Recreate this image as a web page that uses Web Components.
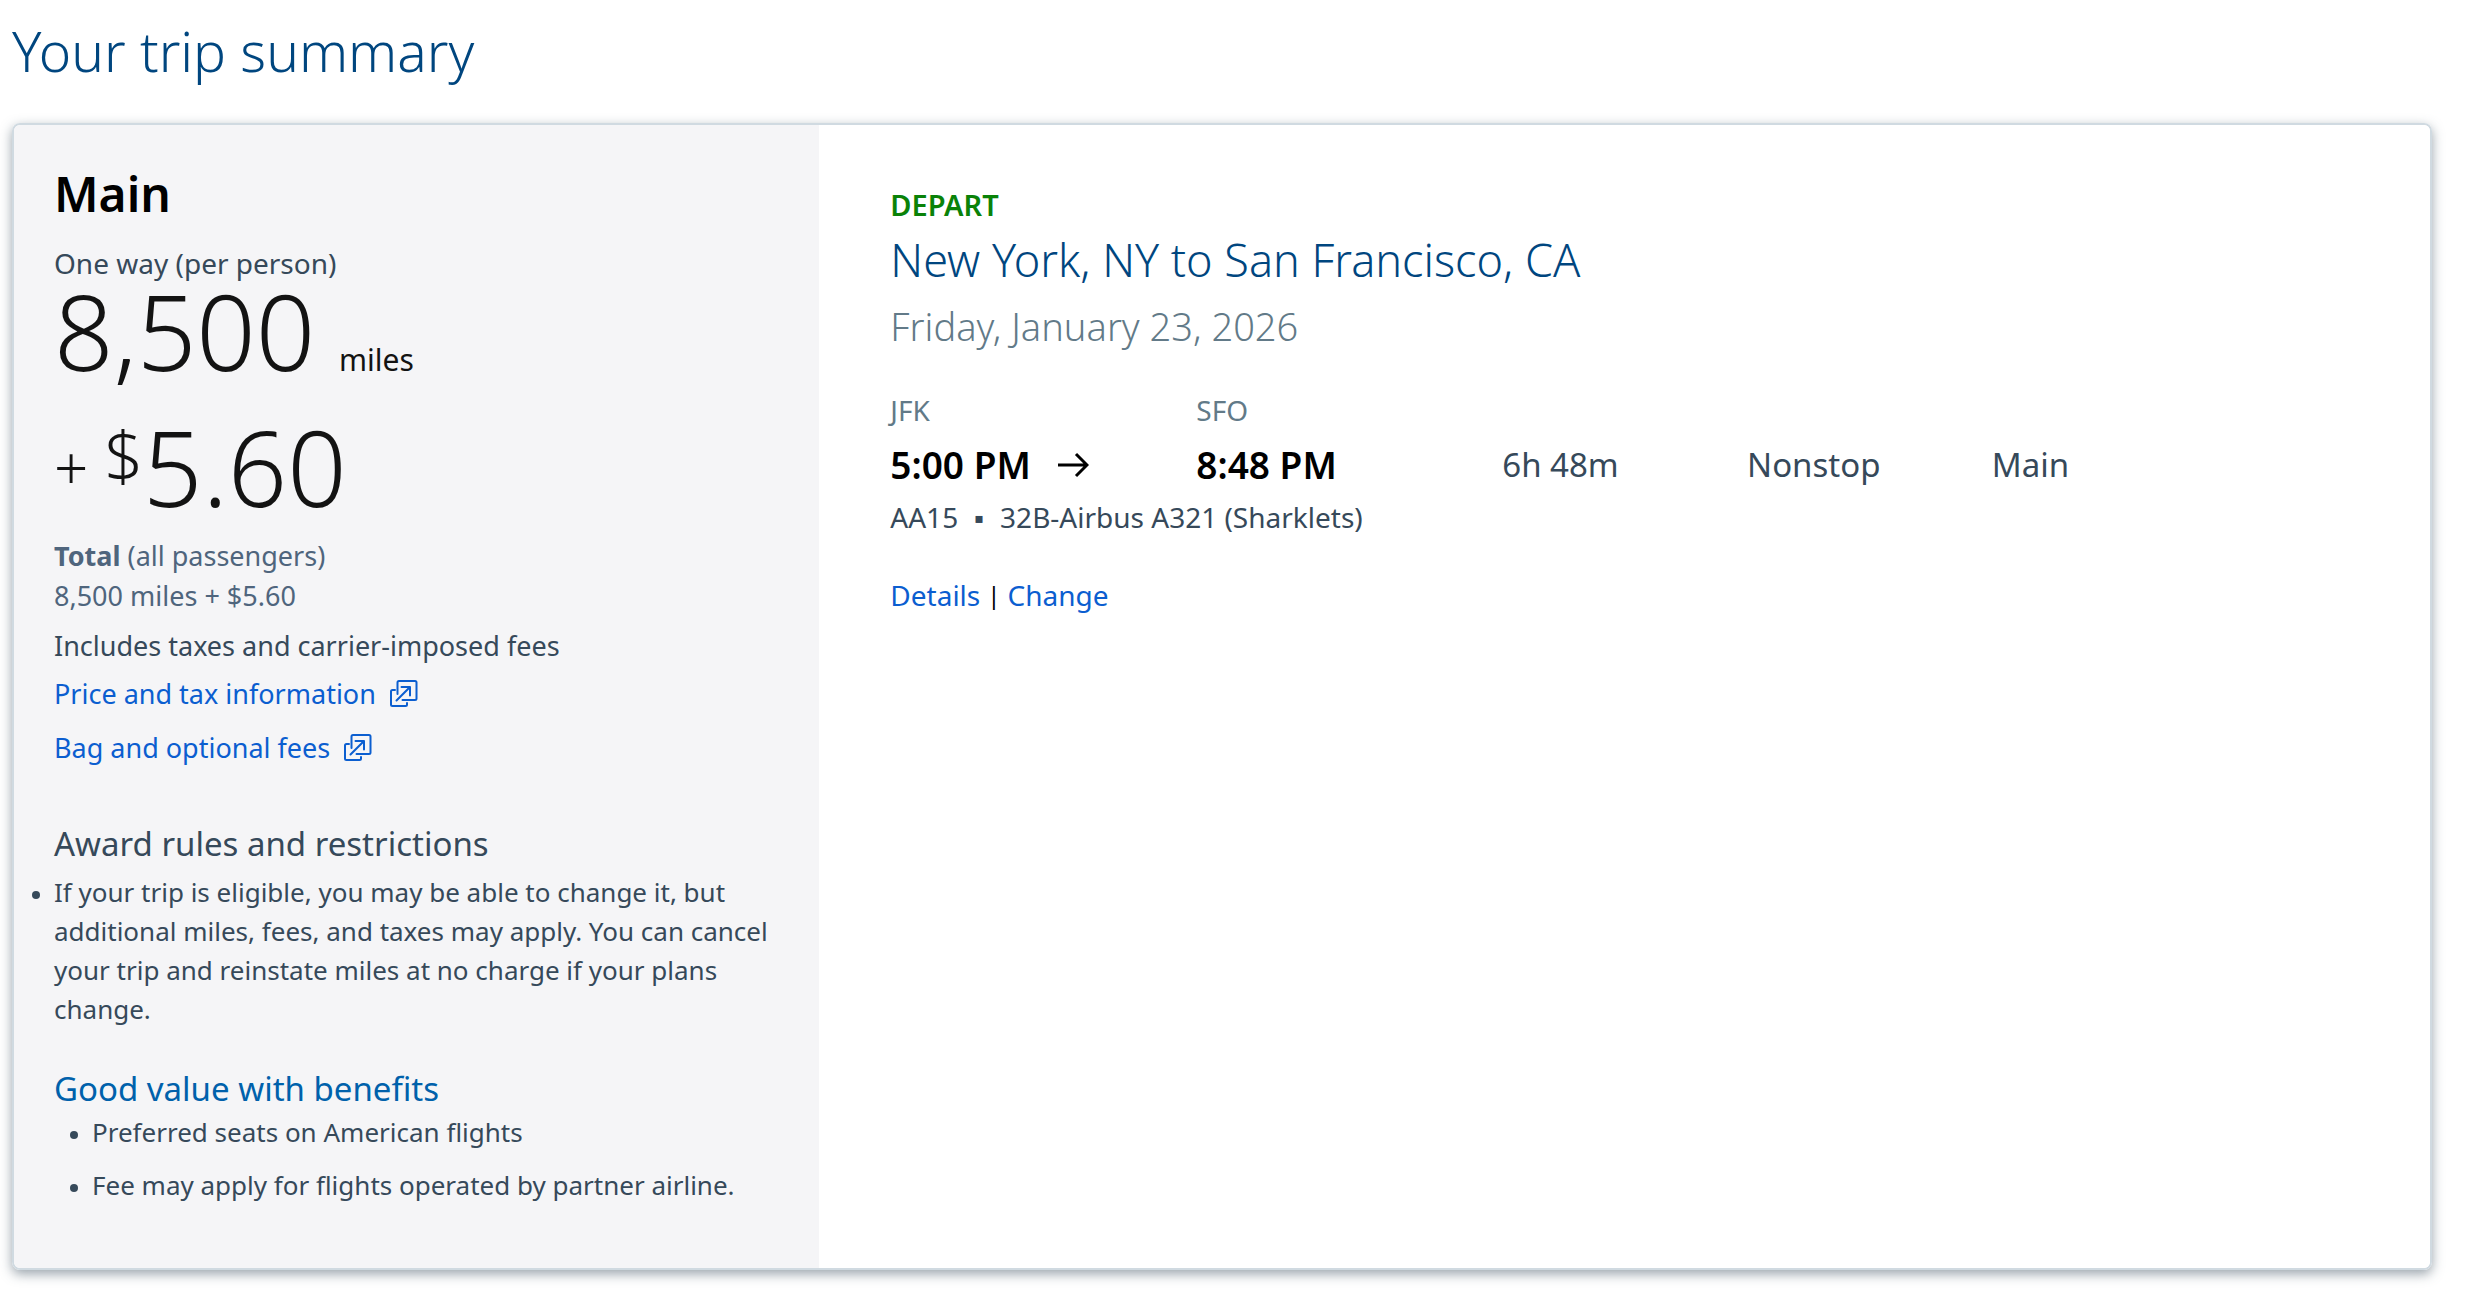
<!DOCTYPE html>
<html lang="en">
<head>
<meta charset="utf-8">
<title>Your trip summary</title>
<style>
  body {
    margin: 0;
    background: #fff;
    color: #36495a;
    font-family: "Noto Sans", "Open Sans", sans-serif;
    --navy: #00467f;
    --link: #0b5ed0;
    --muted: #627a88;
    --ink: #131313;
  }
</style>
</head>
<body>
<trip-summary heading="Your trip summary">
  <fare-panel slot="fare" name="Main" miles="8,500" fee="5.60">
    <ext-link href="#price">Price and tax information</ext-link>
    <ext-link href="#bags">Bag and optional fees</ext-link>
    <note-list slot="notes" heading="Award rules and restrictions">
      <li>If your trip is eligible, you may be able to change it, but additional miles, fees, and taxes may apply. You can cancel your trip and reinstate miles at no charge if your plans change.</li>
    </note-list>
    <note-list slot="notes" accent heading="Good value with benefits">
      <li>Preferred seats on American flights</li>
      <li>Fee may apply for flights operated by partner airline.</li>
    </note-list>
  </fare-panel>
  <flight-slice slot="slice" label="DEPART" route="New York, NY to San Francisco, CA" date="Friday, January 23, 2026">
    <airport-time slot="times" code="JFK" time="5:00 PM" arrow></airport-time>
    <airport-time slot="times" code="SFO" time="8:48 PM"></airport-time>
    <span slot="times">6h 48m</span>
    <span slot="times">Nonstop</span>
    <span slot="times">Main</span>
    <span slot="aircraft">AA15</span>
    <span slot="aircraft">▪</span>
    <span slot="aircraft">32B-Airbus A321 (Sharklets)</span>
  </flight-slice>
</trip-summary>

<script>
  const define = (name, render) => customElements.define(name, class extends HTMLElement {
    connectedCallback() {
      if (this.shadowRoot) return;
      this.attachShadow({ mode: 'open' }).innerHTML = render(this);
    }
  });
  const attr = (el, name) => el.getAttribute(name) || '';

  define('trip-summary', el => `
    <style>
      :host { display: block; padding: 15px 56px 28px 12px; }
      h1 { margin: 0 0 36px; font-size: 55px; line-height: 72px; font-weight: 300; color: var(--navy); }
      .card {
        display: grid; grid-template-columns: 1fr 2fr;
        border: 2px solid #d0dae1; border-radius: 8px; overflow: hidden;
        box-shadow: 0 4px 12px rgba(54, 73, 90, .5);
      }
    </style>
    <h1>${attr(el, 'heading')}</h1>
    <section class="card"><slot name="fare"></slot><slot name="slice"></slot></section>`);

  define('fare-panel', el => `
    <style>
      :host { display: block; padding: 41px 40px 63px; background: #f5f5f7; font-size: 27px; line-height: 40px; }
      h2 { margin: 0 0 23px; font-size: 48px; line-height: 56px; font-weight: 600; color: #000; }
      p { margin: 0; }
      .per { font-size: 28px; line-height: 36px; }
      .price { display: flex; color: var(--ink); font-weight: 300; }
      .big { font-size: 104px; line-height: 100px; }
      .miles { align-items: baseline; gap: 24px; margin-bottom: 36px; }
      .unit { font-size: 30px; font-weight: 400; }
      .fee { margin-bottom: 19px; }
      .plus { font-size: 60px; line-height: 100px; margin-right: 16px; }
      .currency { font-size: 68px; line-height: 76px; }
      .total { color: #4f657d; margin-bottom: 10px; }
      .links { display: flex; flex-direction: column; align-items: flex-start; gap: 14px; margin: 8px 0 54px; }
      .notes { display: flex; flex-direction: column; gap: 38px; }
    </style>
    <h2>${attr(el, 'name')}</h2>
    <p class="per">One way (per person)</p>
    <div class="price miles"><span class="big">${attr(el, 'miles')}</span><span class="unit">miles</span></div>
    <div class="price fee"><span class="plus">+</span><span class="currency">$</span><span class="big">${attr(el, 'fee')}</span></div>
    <div class="total"><p><b>Total</b> (all passengers)</p><p>${attr(el, 'miles')} miles + $${attr(el, 'fee')}</p></div>
    <p>Includes taxes and carrier-imposed fees</p>
    <div class="links"><slot></slot></div>
    <div class="notes"><slot name="notes"></slot></div>`);

  define('ext-link', el => `
    <style>
      :host { display: block; }
      a { display: flex; align-items: center; gap: 14px; color: var(--link); text-decoration: none; }
      svg { width: 28px; height: 28px; fill: none; stroke: currentColor; stroke-width: 2; stroke-linecap: round; stroke-linejoin: round; }
    </style>
    <a href="${attr(el, 'href')}"><slot></slot>
      <svg viewBox="0 0 28 28" aria-hidden="true">
        <path d="M7.5 14V2.5Q7.5 1 9 1H25Q26.5 1 26.5 2.5V18.5Q26.5 20 25 20H12.5"/>
        <path d="M5 10H2.5Q1 10 1 11.5V24.5Q1 26 2.5 26H15.5Q17 26 17 24.5V23"/>
        <path d="M6.5 20.5L20 7M11.5 7H20V15.5"/>
      </svg>
    </a>`);

  define('note-list', el => `
    <style>
      :host { display: block; font-size: 26px; line-height: 39px; }
      h3 { margin: 0 0 7px; font-size: 33px; line-height: 44px; font-weight: 400; }
      ul { display: flex; flex-direction: column; gap: 14px; margin: 0 0 0 -22px; padding: 0; list-style: none; }
      ::slotted(li) { display: grid; grid-template-columns: 22px 1fr; }
      ::slotted(li)::before { content: ""; width: 8px; height: 8px; margin-top: 18px; border-radius: 50%; background: currentColor; }
      :host([accent]) h3 { color: #0061ab; margin-bottom: 2px; }
      :host([accent]) ul { margin-left: 16px; }
    </style>
    <h3>${attr(el, 'heading')}</h3>
    <ul><slot></slot></ul>`);

  define('flight-slice', el => `
    <style>
      :host { display: block; padding: 62px 71px; background: #fff; font-size: 28px; line-height: 40px; }
      p, h2 { margin: 0; }
      .label { margin-bottom: 9px; font-size: 29px; line-height: 36px; font-weight: 600; color: #0a8208; }
      h2 { margin-bottom: 14px; font-size: 45px; line-height: 56px; font-weight: 300; color: var(--navy); }
      .date { margin-bottom: 42px; font-size: 38px; line-height: 48px; font-weight: 300; color: var(--muted); }
      .times { display: grid; grid-template-columns: 5fr 5fr 4fr 4fr 6fr; align-items: end; font-size: 33px; line-height: 48px; }
      .aircraft { display: flex; gap: 16px; margin: 8px 0 38px; }
      .actions { display: flex; gap: 7px; }
      .bar { font-size: 24px; color: #000; }
      a { color: var(--link); text-decoration: none; }
    </style>
    <p class="label">${attr(el, 'label')}</p>
    <h2>${attr(el, 'route')}</h2>
    <p class="date">${attr(el, 'date')}</p>
    <div class="times"><slot name="times"></slot></div>
    <div class="aircraft"><slot name="aircraft"></slot></div>
    <div class="actions"><a href="#details">Details</a><span class="bar">|</span><a href="#change">Change</a></div>`);

  define('airport-time', el => `
    <style>
      :host { display: block; }
      .code { margin-bottom: 13px; font-size: 28px; line-height: 36px; color: var(--muted); }
      .time { display: flex; align-items: center; gap: 26px; font-size: 37px; line-height: 48px; font-weight: 600; color: #000; }
      svg { width: 32px; height: 26px; fill: none; stroke: currentColor; stroke-width: 3; }
    </style>
    <div class="code">${attr(el, 'code')}</div>
    <div class="time">${attr(el, 'time')}${el.hasAttribute('arrow') ? `
      <svg viewBox="0 0 32 26" aria-hidden="true"><path d="M1 13H30M19 2L30 13L19 24"/></svg>` : ''}</div>`);
</script>
</body>
</html>
